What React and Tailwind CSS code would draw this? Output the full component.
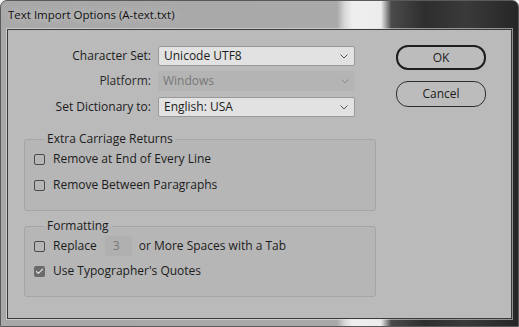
import { Check } from "lucide-react";

function Chevron({ color = "#555" }) {
  return (
    <svg width="8" height="5" viewBox="0 0 8 5" className="shrink-0">
      <path d="M0.5 0.5 L4 4 L7.5 0.5" fill="none" stroke={color} strokeWidth="1" />
    </svg>
  );
}

function Select({ value, disabled }) {
  return (
    <div
      className={
        disabled
          ? "h-[20px] w-[197px] flex items-center justify-between pl-[5px] pr-[6px] bg-[#b4b4b4] text-[#787878] rounded-[2px]"
          : "h-[20px] w-[197px] flex items-center justify-between pl-[5px] pr-[6px] bg-[#e2e2e2] border border-[#999] text-[#1c1c1c] rounded-[2px]"
      }
    >
      <span>{value}</span>
      <Chevron color={disabled ? "#8a8a8a" : "#555"} />
    </div>
  );
}

function Box({ checked }) {
  return checked ? (
    <div className="w-[11px] h-[11px] rounded-[2px] bg-[#6a6a6a] flex items-center justify-center shrink-0">
      <Check size={9} strokeWidth={3.5} color="#d8d8d8" />
    </div>
  ) : (
    <div className="w-[11px] h-[11px] rounded-[2px] border border-[#4a4a4a] shrink-0" />
  );
}

function Row({ checked, children, className = "" }) {
  return (
    <div className={"flex items-center gap-[8px] " + className}>
      <Box checked={checked} />
      {children}
    </div>
  );
}

export default function App() {
  return (
    <div className="w-[519px] h-[327px] overflow-hidden bg-[#f2f2f2]">
      <div className="w-[519px] h-[327px] rounded-t-[7px] border border-[#5a5a5a] bg-[linear-gradient(90deg,#a8a8a8_0%,#a9a9a9_65%,#d8d8d8_66.5%,#efefef_68%,#ececec_73.5%,#4a4a4a_75.5%,#2e2e2e_82%,#3a3a3a_90%,#262626_100%)] font-['Open_Sans',sans-serif] text-[12px] text-[#1c1c1c] flex flex-col">
        <div className="h-[28px] pl-[7px] flex items-center text-[11.5px] text-[#111] [text-shadow:0_0_8px_rgba(235,235,235,0.9)]">
          Text Import Options (A-text.txt)
        </div>
        <div className="mx-[6px] h-[290px] border border-[#3a3a3a] shadow-[0_0_0_1px_rgba(230,230,230,0.55)] bg-[#bababa]">
          <div className="flex pt-[15px]">
            <div className="flex flex-col pt-[1px]">
              <div className="flex items-center h-[20px]">
                <span className="w-[144px] text-right pr-[1px]">Character Set:</span>
                <div className="ml-[6px]">
                  <Select value="Unicode UTF8" />
                </div>
              </div>
              <div className="flex items-center h-[20px] mt-[5px]">
                <span className="w-[144px] text-right pr-[1px] text-[#2a2a2a]">Platform:</span>
                <div className="ml-[6px]">
                  <Select value="Windows" disabled />
                </div>
              </div>
              <div className="flex items-center h-[20px] mt-[6px]">
                <span className="w-[144px] text-right pr-[1px]">Set Dictionary to:</span>
                <div className="ml-[6px]">
                  <Select value="English: USA" />
                </div>
              </div>
            </div>
            <div className="ml-[41px] flex flex-col gap-[11px]">
              <button className="w-[90px] h-[25px] rounded-[12px] border-2 border-[#1e1e1e] bg-[#bcbcbc] text-[12px] text-[#1c1c1c]">
                OK
              </button>
              <button className="w-[90px] h-[26px] rounded-[12px] border border-[#2e2e2e] bg-[#bcbcbc] text-[12px] text-[#1c1c1c]">
                Cancel
              </button>
            </div>
          </div>

          <fieldset className="ml-[16px] mt-[14px] w-[352px] border border-[#a6a6a6] rounded-[3px] bg-[#b6b6b6] px-[9px] pb-[13px]">
            <legend className="ml-[10px] px-[3px] leading-[16px] text-[#1c1c1c]">Extra Carriage Returns</legend>
            <Row className="h-[24px]">Remove at End of Every Line</Row>
            <Row className="h-[24px] mt-[2px]">Remove Between Paragraphs</Row>
          </fieldset>

          <fieldset className="ml-[16px] mt-[7px] w-[352px] border border-[#a6a6a6] rounded-[3px] bg-[#b6b6b6] px-[9px] pb-[13px]">
            <legend className="ml-[10px] px-[3px] leading-[16px] text-[#1c1c1c]">Formatting</legend>
            <Row className="h-[22px] mt-[1px]">
              <span>Replace</span>
              <div className="w-[27px] h-[20px] bg-[#b0b0b0] rounded-[2px] pl-[8px] flex items-center text-[#777]">3</div>
              <span className="ml-[-1px]">or More Spaces with a Tab</span>
            </Row>
            <Row checked className="h-[24px] mt-[2px]">Use Typographer's Quotes</Row>
          </fieldset>
        </div>
      </div>
    </div>
  );
}
